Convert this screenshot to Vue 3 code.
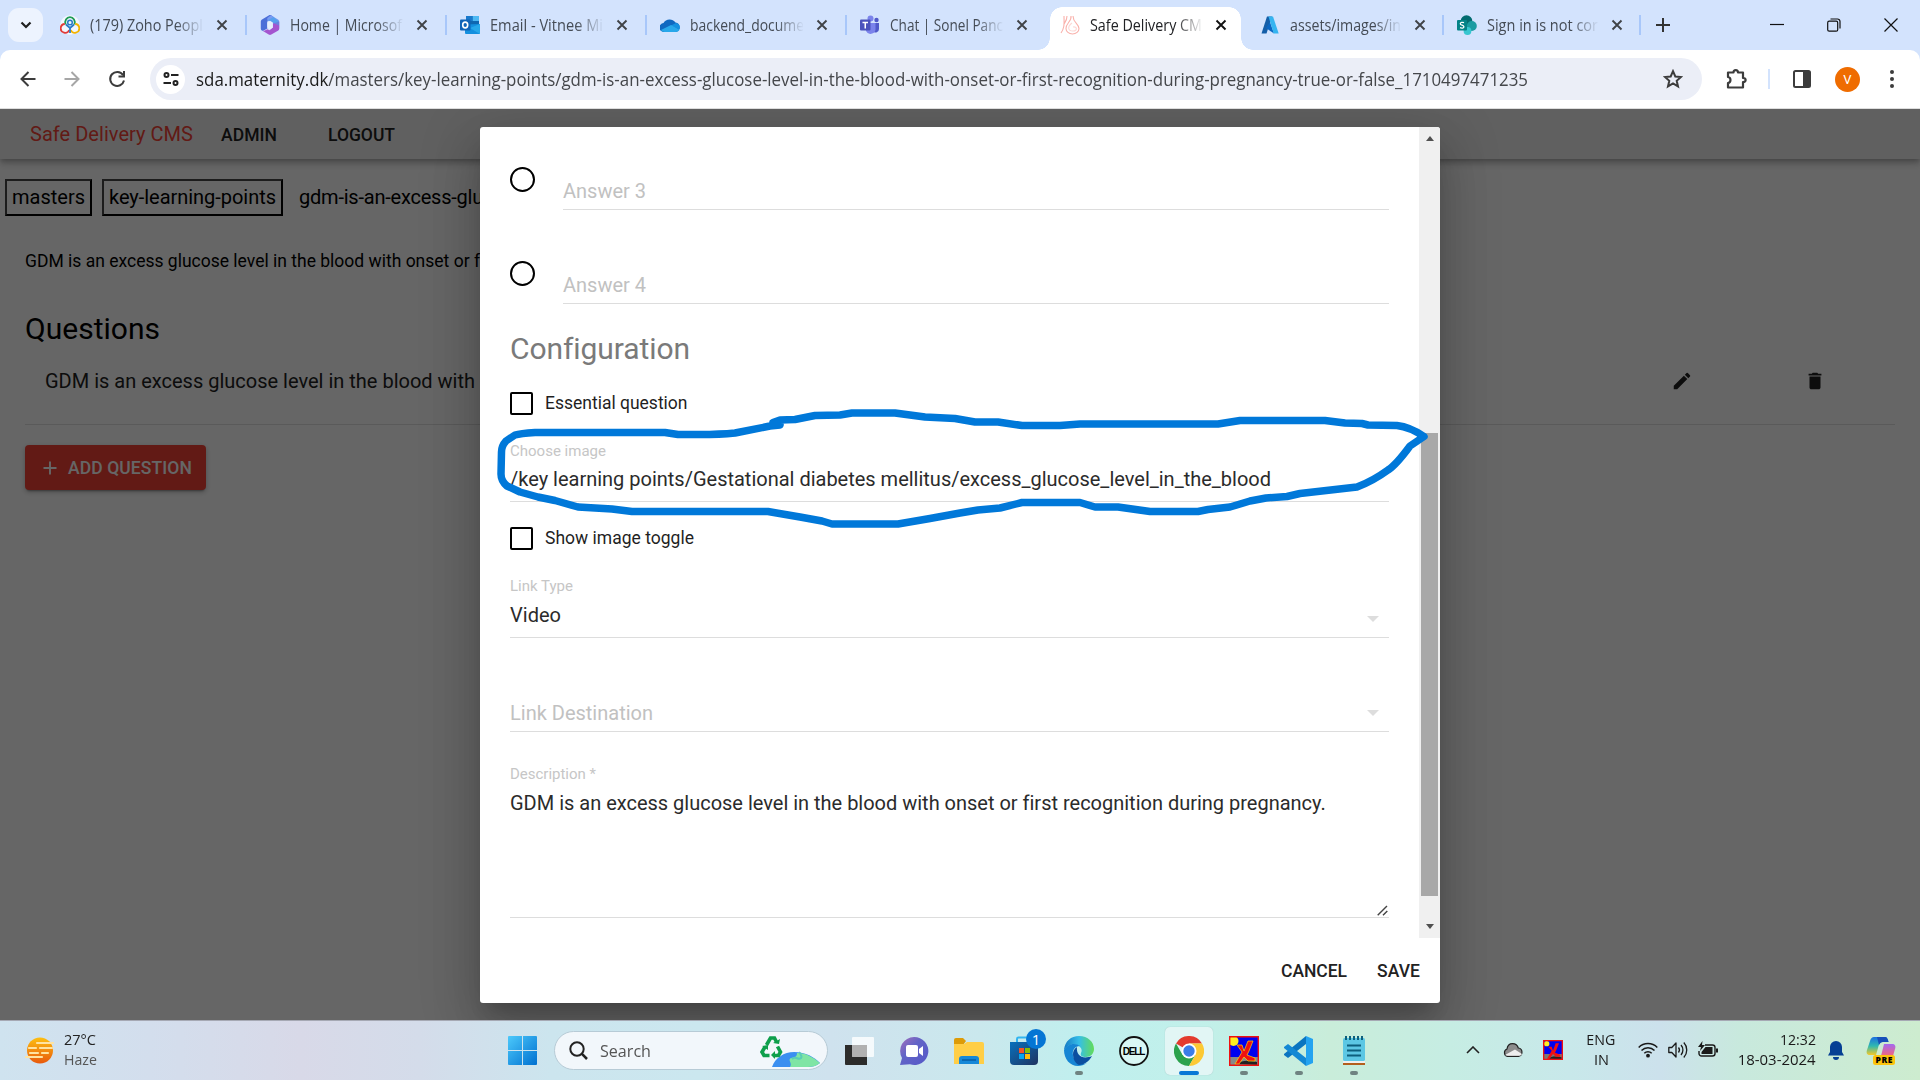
<script setup>
const tabs = [
  { id: 'zoho', title: '(179) Zoho Peopl', fit: 113, width: 200 },
  { id: 'm365', title: 'Home | Microsof', fit: 112, width: 200 },
  { id: 'outlook', title: 'Email - Vitnee Mi', fit: 113, width: 200 },
  { id: 'onedrive', title: 'backend_docume', fit: 114, width: 200 },
  { id: 'teams', title: 'Chat | Sonel Panc', fit: 113, width: 200 },
  { id: 'sda', title: 'Safe Delivery CM', fit: 112, width: 200, active: true },
  { id: 'azure', title: 'assets/images/in', fit: 111, width: 197 },
  { id: 'sharepoint', title: 'Sign in is not cor', fit: 111, width: 197 },
]

// Fits a run of text to a given width, by glyph scale or by tracking.
const vFit = {
  mounted(el, { value, modifiers }) {
    const natural = el.getBoundingClientRect().width
    if (modifiers.track) {
      el.style.letterSpacing = `${(value - natural) / el.textContent.length}px`
    } else {
      el.style.transform = `scaleX(${value / natural})`
    }
  },
}
</script>

<template>
  <div class="screen">
    <header class="tabstrip">
      <button class="tab-search">
        <svg width="12" height="8" viewBox="0 0 12 8"><path d="M1.5 1.5 6 6l4.500-4.500" fill="none" stroke="#1f1f1f" stroke-width="2.200" /></svg>
      </button>
      <div class="tabs">
        <div v-for="t in tabs" :key="t.id" class="tab" :class="{ active: t.active, narrow: t.width < 200, nosep: t.active }">
          <svg class="fav" width="20" height="20" viewBox="0 0 20 20">
            <template v-if="t.id === 'zoho'">
              <circle cx="10" cy="10" r="9.800" fill="#fff" opacity=".7" />
              <g fill="none" stroke-width="1.800">
                <path d="M5.600 9.500a4.800 5.200 0 1 1 8.800 0" stroke="#1f9d55" />
                <path d="M4.800 9a4.400 4.400 0 1 0 4.400 6" stroke="#e23c39" />
                <path d="M15.200 9a4.400 4.400 0 1 1-4.400 6" stroke="#f4b400" />
                <path d="M10 18v-6M6 9.500l4 3.500 4-3.500" stroke="#2a7bc8" />
              </g>
              <circle cx="10" cy="7.500" r="2.300" fill="none" stroke="#2a7bc8" stroke-width="1.500" />
            </template>
            <template v-else-if="t.id === 'm365'">
              <path d="M9.500 0 2 4.500C1 5.200.8 6 .8 7v6.500c0 1.500 1 2.300 2.500 2.300l4-2.300V7.500c0-1.200.4-1.900 1.400-2.500l4.800-2.900L11.500.4C10.800 0 10.200-.2 9.500 0z" fill="#4b6fd8" />
              <path d="m11 .2 7 4.300c.9.600 1.200 1.200 1.200 2.200v6.300c0 1.200-.3 1.800-1.300 2.400l-5.100-3V8L7.300 5.500V3z" fill="#7a9bf2" />
              <path d="M13 12.500v-4L19.200 6.500v7c0 1-.4 1.700-1.300 2.200l-6.600 3.900c-.9.500-1.700.5-2.600 0L2.500 15.800c1.800.3 3.300-.5 4.800-1.500l2.200 1z" fill="#a455cf" />
              <path d="M13.500 2 19 6.500v4l-6-2.500-5-3z" fill="#38a4ea" opacity=".55" />
              <path d="M7.300 7.500 10 5.800 12.800 7.500v5L10 14.200l-2.700-1.700z" fill="#e6eefc" />
            </template>
            <template v-else-if="t.id === 'outlook'">
              <path d="M6 1h13v10H6z" fill="#0f67b1" /><path d="M12.500 1H19v5h-6.500z" fill="#4db8f3" /><path d="M6 1h6.500v5H6z" fill="#1979cc" />
              <path d="M5 9.500 20 9v9a1 1 0 0 1-1 1H6a1 1 0 0 1-1-1z" fill="#1490df" /><path d="M20 9v10L10 13z" fill="#28a8ea" />
              <rect y="4.500" width="10.500" height="11" rx="1" fill="#0f64b8" /><ellipse cx="5.200" cy="10" rx="2.500" ry="2.900" fill="none" stroke="#fff" stroke-width="1.600" />
            </template>
            <template v-else-if="t.id === 'onedrive'">
              <path d="M4.500 17A4.500 4.500 0 0 1 3.500 8 7 6.500 0 0 1 15.500 7.500 4.800 4.800 0 0 1 15.500 17z" fill="#0f68c0" />
              <path d="M11 10.500 16 8a4.600 4.600 0 0 1 3.500 6.500z" fill="#1490df" /><path d="M1 15 11 10l8.500 4.800C18.800 16.400 17 17 15.500 17h-11C3 17 1.700 16.300 1 15z" fill="#28a8ea" />
            </template>
            <template v-else-if="t.id === 'teams'">
              <circle cx="16.500" cy="5" r="2.200" fill="#5059c9" /><circle cx="10.500" cy="3.500" r="3" fill="#7b83eb" />
              <path d="M13 8h6v6a3.500 3.500 0 0 1-6 2.500z" fill="#5059c9" /><path d="M6 8h9.500v6.500a5 5 0 0 1-9.500 1.500z" fill="#7b83eb" />
              <rect y="4.500" width="10.500" height="11" rx="1" fill="#4b53bc" /><path d="M2.500 7.500h5.500M5.250 7.500v6" stroke="#fff" stroke-width="1.500" />
            </template>
            <template v-else-if="t.id === 'sda'">
              <g fill="none" stroke="#f9b1ab" stroke-width="1.100"><path d="M1 18C5 12 4 8 4 1M4 9c2-3 3-4 3-8" /><path d="M11 1c1 5-5 7-5 12.500a6.500 5.500 0 0 0 13 0C19 9 13 8 13 1" /><path d="M12 8c-5 4-4 8 1 8s4-5 0-4" opacity=".5" /></g>
            </template>
            <template v-else-if="t.id === 'azure'">
              <path d="M7 1.500h5L6.500 18.500H1.500z" fill="#145ea8" /><path d="m10 7 4 11.500-8-5.500z" fill="#0a66c2" /><path d="M8.500 1.500H13l5.700 17h-5z" fill="#35b4f0" />
            </template>
            <template v-else>
              <circle cx="9.500" cy="6" r="5.800" fill="#036c70" /><circle cx="14.800" cy="11" r="5" fill="#1a9ba1" /><circle cx="10.500" cy="16" r="3.900" fill="#37c6d0" />
              <rect y="5" width="10" height="10.500" rx="1" fill="#038387" /><path d="M7 7.700C5.500 7 3.300 7.200 3.300 8.700c0 1.700 3.600 1.300 3.600 3 0 1.500-2.200 1.700-3.900 1" fill="none" stroke="#fff" stroke-width="1.300" />
            </template>
          </svg>
          <span class="title"><span v-fit="t.fit" class="fit">{{ t.title }}</span></span>
          <svg class="x" width="12" height="12" viewBox="0 0 12 12"><path d="m1.500 1.500 9 9m0-9-9 9" stroke="currentColor" stroke-width="1.900" /></svg>
        </div>
      </div>
      <svg class="plus" width="14" height="14" viewBox="0 0 14 14"><path d="M7 0v14M0 7h14" stroke="#333" stroke-width="2" /></svg>
      <div class="winctl">
        <svg width="14" height="14" viewBox="0 0 14 14"><path d="M0 6.500h14" stroke="#111" stroke-width="1.200" /></svg>
        <svg width="14" height="14" viewBox="0 0 14 14"><g fill="none" stroke="#111" stroke-width="1.200"><rect x=".7" y="3.200" width="10" height="10" rx="1.500" /><path d="M3.500 1h7a2.500 2.500 0 0 1 2.500 2.500v7" /></g></svg>
        <svg width="14" height="14" viewBox="0 0 14 14"><path d="m.5.500 13 13m0-13-13 13" stroke="#111" stroke-width="1.200" /></svg>
      </div>
    </header>

    <div class="toolbar-back">
      <div class="toolbar">
        <svg class="nav-i" width="16" height="16" viewBox="0 0 16 16"><path d="M15.500 8H1.500M8.500 1 1.500 8l7 7" fill="none" stroke="#3c3c3c" stroke-width="2" /></svg>
        <svg class="nav-i" width="16" height="16" viewBox="0 0 16 16"><path d="M.5 8h14M7.500 1l7 7-7 7" fill="none" stroke="#a6a6a6" stroke-width="2" /></svg>
        <svg class="nav-i" width="18" height="18" viewBox="0 0 18 18"><path d="M15 5A7 7 0 1 0 16 10.500M16 1v5.500h-5.500" fill="none" stroke="#3c3c3c" stroke-width="2" /></svg>
        <div class="omnibox">
          <span class="site"><svg width="16" height="14" viewBox="0 0 16 14"><g fill="none" stroke="#222" stroke-width="2"><circle cx="3.500" cy="3" r="2" /><path d="M8 3h7.500M.5 11H8" /><circle cx="12.500" cy="11" r="2" /></g></svg></span>
          <span v-fit="1332" class="url fit"><b>sda.maternity.dk</b>/masters/key-learning-points/gdm-is-an-excess-glucose-level-in-the-blood-with-onset-or-first-recognition-during-pregnancy-true-or-false_1710497471235</span>
          <svg class="star" width="20" height="20" viewBox="0 0 20 20"><path d="m10 2.200 2.300 5.300 5.700.5-4.300 3.800 1.300 5.600-5-3-5 3 1.300-5.600L2 8l5.700-.5z" fill="none" stroke="#3c3c3c" stroke-width="2" /></svg>
        </div>
        <svg class="ext" width="22" height="22" viewBox="0 0 22 22"><path d="M2 4.500h5.500c0-3.300 4.500-3.300 4.500 0h5V10c3.500 0 3.500 4 0 4v5.500H2V15c3.300-.5 3.300-5.500 0-6z" fill="none" stroke="#3c3c3c" stroke-width="2.200" stroke-linejoin="round" /></svg>
        <i class="bar"></i>
        <svg class="side" width="18" height="18" viewBox="0 0 18 18"><rect x="1" y="1" width="16" height="16" rx="1.500" fill="none" stroke="#3c3c3c" stroke-width="2" /><path d="M10 1h7v16h-7z" fill="#3c3c3c" /></svg>
        <span class="avatar">V</span>
        <svg class="dots" width="4" height="18" viewBox="0 0 4 18"><g fill="#3c3c3c"><circle cx="2" cy="2" r="2" /><circle cx="2" cy="9" r="2" /><circle cx="2" cy="16" r="2" /></g></svg>
      </div>
    </div>

    <main class="page">
      <nav class="appbar">
        <div class="brand"><span v-fit.track="163">Safe Delivery CMS</span></div>
        <div class="admin"><span v-fit.track="56">ADMIN</span></div>
        <div class="logout"><span v-fit.track="67">LOGOUT</span></div>
      </nav>
      <div class="crumbs">
        <span class="crumb c1"><span v-fit.track="73">masters</span></span>
        <span class="crumb c2"><span v-fit.track="167">key-learning-points</span></span>
        <span class="last"><span v-fit.track="184">gdm-is-an-excess-glu</span></span>
      </div>
      <p class="desc"><span v-fit.track="455">GDM is an excess glucose level in the blood with onset or f</span></p>
      <h2><span v-fit.track="135">Questions</span></h2>
      <div class="question">
        <span v-fit.track="430">GDM is an excess glucose level in the blood with</span>
        <svg class="pencil" width="22" height="22" viewBox="0 0 24 24"><path fill="#222" d="M3 17.250V21h3.750L17.810 9.940l-3.750-3.750L3 17.250zM20.710 7.040a1 1 0 0 0 0-1.410l-2.340-2.340a1 1 0 0 0-1.410 0l-1.830 1.830 3.750 3.750 1.830-1.830z" /></svg>
        <svg class="trash" width="22" height="22" viewBox="0 0 24 24"><path fill="#222" d="M6 19c0 1.100.9 2 2 2h8c1.100 0 2-.9 2-2V7H6v12zM19 4h-3.500l-1-1h-5l-1 1H5v2h14V4z" /></svg>
      </div>
      <button class="add">
        <svg width="14" height="14" viewBox="0 0 14 14"><path d="M7 .5v13M.5 7h13" stroke="#fff" stroke-width="1.900" /></svg>
        <span v-fit.track="124">ADD QUESTION</span>
      </button>

      <div class="scrim">
        <section class="dialog">
          <div class="scroller">
            <form class="form">
              <div class="answer first"><i class="radio"></i><div class="field"><span v-fit.track="83">Answer 3</span></div></div>
              <div class="answer"><i class="radio"></i><div class="field"><span v-fit.track="83">Answer 4</span></div></div>
              <h3><span v-fit.track="179">Configuration</span></h3>
              <label class="check"><i class="box"></i><span v-fit.track="142.500">Essential question</span></label>
              <div class="input g7"><small><span v-fit.track="96">Choose image</span></small><div class="val"><span v-fit.track="761">/key learning points/Gestational diabetes mellitus/excess_glucose_level_in_the_blood</span></div></div>
              <label class="check"><i class="box"></i><span v-fit.track="149">Show image toggle</span></label>
              <div class="input"><small><span v-fit.track="63">Link Type</span></small><div class="val"><span v-fit.track="51">Video</span><i class="caret"></i></div></div>
              <div class="input empty"><div class="val"><span v-fit.track="143">Link Destination</span><i class="caret"></i></div></div>
              <div class="input area"><small><span v-fit.track="86">Description *</span></small>
                <div class="val"><span v-fit.track="815">GDM is an excess glucose level in the blood with onset or first recognition during pregnancy.</span>
                  <svg class="grip" width="11" height="11" viewBox="0 0 11 11"><path d="m.7 10.300 9.300-9.300M6 10.300 10.300 6" stroke="#444" stroke-width="1.400" /></svg>
                </div>
              </div>
            </form>
            <div class="scrollbar"><i class="up"></i><i class="thumb"></i><i class="down"></i></div>
          </div>
          <footer><span v-fit.track="66">CANCEL</span><span v-fit.track="43">SAVE</span></footer>
        </section>
      </div>
    </main>

    <footer class="taskbar">
      <div class="weather">
        <svg width="30" height="27" viewBox="0 0 30 27"><defs><linearGradient id="sun" x1="0" y1="0" x2="0" y2="1"><stop stop-color="#fdbf11" /><stop offset="1" stop-color="#e8590c" /></linearGradient></defs><circle cx="15" cy="13.500" r="13" fill="url(#sun)" /><g stroke="#ffe3a0" stroke-width="2.200" stroke-linecap="round"><path d="M12 6h16M4 11h7M15 11h12M5 16h8M17 16h6M1 20h16" /></g></svg>
        <div class="wtext"><div class="deg"><span v-fit="32" class="fit">27°C</span></div><div class="haze"><span v-fit="33" class="fit">Haze</span></div></div>
      </div>
      <svg class="start" width="29" height="29" viewBox="0 0 29 29"><defs><linearGradient id="win" x1="0" y1="0" x2="1" y2="1"><stop stop-color="#4cc9fb" /><stop offset="1" stop-color="#0070d0" /></linearGradient></defs><path fill="url(#win)" d="M1 0h13v14H0V1a1 1 0 0 1 1-1zM15 0h13a1 1 0 0 1 1 1v13H15zM0 15h14v14H1a1 1 0 0 1-1-1zM15 15h14v13a1 1 0 0 1-1 1H15z" /></svg>
      <div class="search">
        <svg width="19" height="19" viewBox="0 0 19 19"><circle cx="8" cy="8" r="6.700" fill="none" stroke="#222" stroke-width="2" /><path d="m12.700 12.700 5.300 5.300" stroke="#222" stroke-width="2.500" /></svg>
        <span v-fit="51" class="fit">Search</span>
        <svg class="earth" width="62" height="32" viewBox="0 0 62 32">
          <path d="M12 31c3-9 12-15 22-15 12 0 20 5 26 11-4 3-8 4-12 4z" fill="#3b8ff0" /><path d="M30 31c3-4-3-7 1-9 4-1 6-1 6-5 10 0 17 5 23 10-4 3-8 4-12 4z" fill="#7fe5a4" /><path d="M32 23c4-4 6 2 9-1 2-2-2-4-1-6" fill="none" stroke="#59cdb5" stroke-width="2" />
          <g fill="none" stroke="#0e9f4b" stroke-width="3.600"><path d="m6.500 9 4-7h4l2 4" /><path d="m17.500 10.500 3 5.500-2 3.500h-5" /><path d="M9.500 19.500H4l-2-3.500L5 11" /></g>
          <path d="m13 7 6 1 1-5zM15 15v8l-4-4zM2 10l6-1 0 5z" fill="#0e9f4b" />
        </svg>
      </div>
      <div class="apps">
        <svg viewBox="0 0 30 30"><path d="M1 9h22v20H2a1 1 0 0 1-1-1z" fill="#2c2c2b" /><rect x="8" y="1" width="22" height="20" rx="1" fill="#fff" opacity=".8" /><path d="M8 9h15v12H8z" fill="#aaa" opacity=".85" /></svg>
        <svg viewBox="0 0 30 30"><defs><linearGradient id="chat" x1="0" y1="0" x2="1" y2="1"><stop stop-color="#a66fba" /><stop offset=".4" stop-color="#6264c7" /><stop offset="1" stop-color="#5558c8" /></linearGradient></defs><path d="M15 1a14 14 0 1 1-4 27.300L1 29l2-7A14 14 0 0 1 15 1z" fill="url(#chat)" /><rect x="7" y="9" width="12" height="12" rx="2" fill="#fff" /><path d="m20 13 4-3v10l-4-3z" fill="#fff" /></svg>
        <svg viewBox="0 0 30 30"><path d="M0 4a2 2 0 0 1 2-2h7l3 3-3 4H0z" fill="#dd9b08" /><path d="M0 8h10l3-2h15a2 2 0 0 1 2 2v20H0z" fill="#ffce46" /><path d="M5 28v-5a3 3 0 0 1 3-3h14a3 3 0 0 1 3 3v5z" fill="#1688d8" /><path d="M8 24h14" stroke="#075ca5" stroke-width="1.500" /></svg>
        <div class="store"><svg viewBox="0 0 30 30"><path d="M8 8V3a1.500 1.500 0 0 1 1.500-1.500h11" fill="none" stroke="#32b5f0" stroke-width="2" /><defs><linearGradient id="store" x1="0" y1="0" x2="1" y2="1"><stop stop-color="#0871bd" /><stop offset="1" stop-color="#203360" /></linearGradient></defs><path d="M1 6h28v19a4 4 0 0 1-4 4H5a4 4 0 0 1-4-4z" fill="url(#store)" /><path d="M10 12h5v5h-5z" fill="#f35325" /><path d="M16 12h5v5h-5z" fill="#81bc06" /><path d="M10 18h5v5h-5z" fill="#05a6f0" /><path d="M16 18h5v5h-5z" fill="#ffba08" /></svg><span class="badge">1</span></div>
        <div class="app run"><svg viewBox="0 0 30 30"><defs><linearGradient id="ed1"><stop stop-color="#1679c4" /><stop offset=".5" stop-color="#35bee8" /><stop offset="1" stop-color="#64dc58" /></linearGradient></defs><path d="M0 14C1 5 7 0 15 0c9 0 15 6 15 13 0 5-4 8-8 8-4 0-6-1-5-4 1-2 1-4-1-6-4-4-12-3-16 3z" fill="url(#ed1)" /><path d="M0 14c3-6 11-8 16-4-5 0-8 4-7 9 1 7 7 11 14 8-3 2-6 3-9 3C6 30 0 23 0 14z" fill="#1685d4" /><path d="M9 18c0-3 1-5 4-7-1 8 5 13 15 9-3 6-9 9-13 9-4-2-6-6-6-11z" fill="#0b4fa0" /></svg></div>
        <svg class="dell" viewBox="0 0 30 30"><circle cx="15" cy="15" r="14" fill="#f2fffd" fill-opacity=".5" stroke="#111" stroke-width="1.800" /><text x="3.800" y="18.700" textLength="22.500" font-family="Liberation Sans" font-weight="700" font-size="10">DELL</text></svg>
        <div class="app run tile"><svg viewBox="0 0 30 30"><path d="M15 15 2 7.500A15 15 0 0 1 28 7.500H15z" fill="#e33b2e" /><path d="M2 7.500A15 15 0 0 0 15 30l6.500-11.300L8.500 18.800z" fill="#2ba24c" /><path d="M15 7.500h13A15 15 0 0 1 15 30l6.500-11.300z" fill="#fcc934" /><circle cx="15" cy="15" r="7.500" fill="#fff" /><circle cx="15" cy="15" r="5.700" fill="#3a7de8" /></svg></div>
        <div class="app run"><svg viewBox="0 0 30 30"><path d="M1 1h28v28H1z" fill="#0000f0" /><path d="M1 21h28v8H1z" fill="#888" /><path d="M8 28c6-5 14-3 20-2v3z" fill="#222" /><circle cx="4.500" cy="5" r="5" fill="#ffee20" /><path d="M8 9h5l2 6 4-10h5l-4 10-2 4 8 3v3h-7l-4-4-5 7H6l7-12z" fill="#f01010" stroke="#ffd800" stroke-width=".7" /><path d="M.7.700h28.600v28.600H.7z" fill="none" stroke="#f01010" stroke-width="1.400" /></svg></div>
        <div class="app run"><svg viewBox="0 0 30 30"><path d="m22 0 7 3v24l-7 3z" fill="#24a3f0" /><path d="M22 0v8L4 22l-4-3v-1z" fill="#0a74c0" /><path d="M22 30v-8L4 8l-4 3v1z" fill="#1488d4" /></svg></div>
        <div class="app run"><svg viewBox="0 0 30 30"><path d="M4 26h22v3H4z" fill="#b35f1c" /><path d="M4 24h22v3H4z" fill="#eee" /><rect x="4" y="2" width="22" height="23" rx="1.500" fill="#5cc7e4" /><g stroke="#0d5f7d" stroke-width="2"><path d="M8 9.500h14M8 14.500h14M8 19.500h14" /><path d="M7 0v4M11 0v4M15 0v4M19 0v4M23 0v4" /></g></svg></div>
      </div>
      <div class="tray">
        <svg class="chev" width="14" height="8" viewBox="0 0 14 8"><path d="m1 7 6-6 6 6" fill="none" stroke="#222" stroke-width="1.600" /></svg>
        <svg class="cloud" width="20" height="14" viewBox="0 0 20 14"><path d="M4.500 13.300A3.800 3.800 0 0 1 4 6C4.500 2.500 7 .7 9.500.7c3 0 5 1.500 5.800 4.300a4.200 4.200 0 0 1 .2 8.300z" fill="#8c8c8c" stroke="#222" stroke-width="1.200" /><path d="M2 12 12 6.500l7 4.500c-.8 1.500-2 1.800-3.500 1.800h-11c-1 0-1.800-.2-2.500-.8z" fill="#eee" /></svg>
        <svg class="mini" width="20" height="20" viewBox="0 0 30 30"><path d="M1 1h28v28H1z" fill="#0000f0" /><path d="M1 21h28v8H1z" fill="#777" /><path d="M8 28c6-5 14-3 20-2v3z" fill="#222" /><circle cx="5.500" cy="5.500" r="4" fill="#ffee20" /><path d="M8 10h5l2 6 4-11h5l-4 10-2 4 8 3v3h-7l-4-4-5 7H6l7-12z" fill="#f01010" /><path d="M1 1h28v28H1z" fill="none" stroke="#f01010" stroke-width="2" /></svg>
        <div class="lang"><div><span v-fit="29" class="fit mid">ENG</span></div><div><span v-fit="15" class="fit mid">IN</span></div></div>
        <svg class="wifi" width="20" height="16" viewBox="0 0 20 16"><g fill="none" stroke="#1a1a1a" stroke-width="1.500"><path d="M.7 5.500a13 13 0 0 1 18.600 0M3.500 8.500a9 9 0 0 1 13 0M6.300 11.300a5.300 5.300 0 0 1 7.400 0" /></g><circle cx="10" cy="13.700" r="1.900" fill="#1a1a1a" /></svg>
        <svg class="vol" width="20" height="18" viewBox="0 0 20 18"><g fill="none" stroke="#1a1a1a" stroke-width="1.300"><path d="M.8 6.500h3L8 2v14l-4.200-4.500h-3z" stroke-linejoin="round" /><path d="M10.500 6.500a4 4 0 0 1 0 5M13 4a7.500 7.500 0 0 1 0 10M15.800 1.500a11 11 0 0 1 0 15" /></g></svg>
        <svg class="bat" width="20" height="17" viewBox="0 0 20 17"><path d="M7 4h7.500A2.500 2.500 0 0 1 17 6.500v6a2.500 2.500 0 0 1-2.500 2.500h-11A2.500 2.500 0 0 1 1 12.500V10" fill="none" stroke="#1a1a1a" stroke-width="1.400" /><path d="M7.500 6h7v7H3.500v-2zM18 7.500h2v4h-2zM4.500 0 0 6h3L2 10l5-6H4z" fill="#1a1a1a" /></svg>
        <div class="clock"><div><span v-fit="36" class="fit right">12:32</span></div><div><span v-fit="78" class="fit right">18-03-2024</span></div></div>
        <svg class="bell" width="16" height="19" viewBox="0 0 16 19"><path d="M8 0a6 6 0 0 1 6 6v5l2 3.500H0L2 11V6a6 6 0 0 1 6-6zM5 16h6a3 3 0 0 1-6 0z" fill="#063f94" /></svg>
        <svg class="pilot" width="30" height="29" viewBox="0 0 30 29"><defs><linearGradient id="cp1" x1="0" y1="0" x2="0" y2="1"><stop stop-color="#1c6fe0" /><stop offset=".5" stop-color="#2fb9b0" /><stop offset="1" stop-color="#f6c928" /></linearGradient><linearGradient id="cp2" x1="0" y1="0" x2="0" y2="1"><stop stop-color="#a469f0" /><stop offset="1" stop-color="#f2677c" /></linearGradient></defs><path d="M8 1h11c2 0 3 2 3.500 5H17c-3 0-4 2-5 6l-2 7H4c-3 0-4-2-3-5l3-9c1-3 2-4 4-4z" fill="url(#cp1)" /><path d="M18 8h8c3 0 4 2 3 5l-2 7H15z" fill="url(#cp2)" /><path d="M11 1h8c2 0 3 2 3.500 5H17c-2 0-3 1-4 3z" fill="#174fb8" /><rect x="7" y="19" width="22" height="10" rx="2.500" fill="#fcc40c" /><text x="9.500" y="27.200" textLength="17" font-family="Open Sans" font-size="8.500" font-weight="800">PRE</text></svg>
      </div>
    </footer>

    <svg class="ink" viewBox="0 0 1920 1080"><path d="M780 425 770 426 735 433Q720 434.500 700 434.500H678L665 432.500H535Q520 433.500 515 435L506 441Q501.500 446 501.500 452L501 474Q501 481 507 486L520 492 538 497 555 500.500 578 507 612 509 632 511.500H768L800 517 822 521 832 524H898L930 518.500 960 513 978 510 1000 508 1022 502.500H1080L1095 507H1118L1150 511.500H1198L1208 509.500 1230 507 1250 501 1266 498 1287 496.500 1300 493.500 1357 487Q1373 481 1388 470 1396 465 1410 446L1424 436.500Q1410 427 1397 425.500L1368 425 1362 423.500 1345 423 1325 420.500H1240L1218 424H1080L1060 425.500H1022L998 422H975L955 418.500 925 417 895 413H852L840 415 815 415.500 795 419.500 780 420 773 422.500Z" /></svg>
  </div>
</template>

<style>
html,
body {
  overflow: hidden;
}
</style>

<style scoped>
* { box-sizing: border-box; }
.screen { position: relative; width: 1920px; height: 1080px; display: flex; flex-direction: column; overflow: hidden; font-family: Roboto, sans-serif; }
svg { display: block; flex: none; }
button { border: 0; padding: 0; }
span { white-space: nowrap; }
.fit { display: inline-block; transform-origin: left center; }
.right { transform-origin: right center; }
.mid { transform-origin: center; }

.tabstrip { height: 50px; flex: none; background: #d3e3fd; display: flex; align-items: center; padding-left: 8px; font: 15.500px "Open Sans", sans-serif; color: #444b55; position: relative; }
.tab-search { width: 35px; height: 34px; border-radius: 11px; background: #edf3fe; display: grid; place-items: center; margin-right: 7px; }
.tabs { display: flex; align-self: stretch; }
.tab { width: 200px; display: flex; align-items: center; padding-left: 10px; position: relative; }
.tab.narrow { width: 197px; }
.tab .title { width: 113px; margin: 0 13px 0 10px; overflow: hidden; line-height: 24px; -webkit-mask-image: linear-gradient(90deg, #000 76%, transparent 101%); mask-image: linear-gradient(90deg, #000 76%, transparent 101%); }
.tab.narrow .title { width: 111px; }
.tab:not(.nosep)::after { content: ""; position: absolute; right: 3px; top: 15px; width: 2px; height: 20px; background: #a8c7fa; }
.tab:nth-child(5)::after { display: none; }
.tab .x { color: #404347; }
.fav, .x, .title { position: relative; }
.tab.active { color: #202124; }
.tab.active .x { color: #111; }
.tab.active .title { width: 112px; }
.tab.active::before { content: ""; position: absolute; left: -12px; top: 7px; width: 215px; height: 43px; background:
  radial-gradient(circle at 0 0, transparent 11.500px, #fff 12px) left bottom / 12px 12px no-repeat,
  radial-gradient(circle at 100% 0, transparent 11.500px, #fff 12px) right bottom / 12px 12px no-repeat,
  radial-gradient(circle at 12px 12px, #fff 11.500px, transparent 12px) 12px 0 / 12px 12px no-repeat,
  radial-gradient(circle at 0 12px, #fff 11.500px, transparent 12px) 191px 0 / 12px 12px no-repeat,
  linear-gradient(#fff, #fff) 24px 0 / 167px 12px no-repeat,
  linear-gradient(#fff, #fff) 12px 12px / 191px 31px no-repeat; }
.plus { margin-left: 12px; }
.winctl { margin-left: auto; margin-right: 22px; display: flex; gap: 43px; }

.toolbar-back { background: #d3e3fd; flex: none; height: 59px; }
.toolbar { height: 59px; background: #fff; border-radius: 10px 10px 0 0; border-bottom: 1px solid #ddd; display: flex; align-items: center; padding-left: 20px; }
.nav-i { margin-right: 28px; }
.nav-i:nth-child(3) { margin-right: 23px; }
.omnibox { position: relative; width: 1552px; height: 42px; margin-left: 1px; border-radius: 21px; background: #ebeef7; display: flex; align-items: center; padding: 0 20px 0 6px; }
.site { width: 29px; height: 29px; border-radius: 50%; background: #fff; display: grid; place-items: center; margin-right: 11px; }
.url { font: 18px/28px "Open Sans", sans-serif; color: #45474b; width: max-content; flex: none; }
.url b { font-weight: 400; color: #1b1b1b; }
.star { position: absolute; right: 19px; top: 11px; }
.ext { margin-left: 24px; }
.bar { width: 2px; height: 20px; background: #d3e3fd; margin-left: 20px; }
.side { margin-left: 23px; }
.avatar { width: 25px; height: 25px; border-radius: 50%; background: #ef6c00; color: #fff; font-size: 13px; display: grid; place-items: center; margin-left: 24px; }
.dots { margin-left: 30px; }

.page { height: 911px; flex: none; background: #fff; position: relative; color: #000; overflow: hidden; }
.appbar { height: 50px; background: #f0f0f0; display: flex; align-items: center; padding-left: 30px; box-shadow: 0 2px 5px -1px rgba(0, 0, 0, .2), 0 5px 6px rgba(0, 0, 0, .14), 0 1px 12px rgba(0, 0, 0, .12); color: #222; }
.brand { font-size: 20px; color: #f44336; width: 191px; }
.admin, .logout { font-size: 17.500px; font-weight: 500; padding-top: 1px; }
.admin { width: 107px; }
.crumbs { display: flex; align-items: center; margin: 20px 0 0 5px; height: 37px; font-size: 20px; }
.crumb { height: 37px; border: 2px outset #555; border-color: #484848 #000 #000 #484848; padding: 4px 5px; line-height: 25px; }
.c1 { width: 87px; margin-right: 10px; }
.c2 { width: 181px; margin-right: 16px; }
.last { width: 181px; overflow: hidden; line-height: 25px; }
.desc { margin: 34px 0 0 25px; font-size: 17.500px; line-height: 22px; }
h2 { margin: 39px 0 0 25px; font-size: 30px; line-height: 36px; font-weight: 400; }
.question { margin: 1px 25px 0; height: 77px; border-bottom: 1px solid rgba(0, 0, 0, .12); padding: 0 69px 10px 20px; display: flex; align-items: center; font-size: 20px; color: #222; }
.pencil { margin-left: auto; }
.trash { margin-left: 111px; }
.add { margin: 20px 0 0 25px; width: 181px; height: 45px; border-radius: 4px; background: #f44336; color: #fff; display: flex; align-items: center; padding-left: 18px; gap: 11px; font: 500 17.500px Roboto, sans-serif; box-shadow: 0 3px 2px -2px rgba(0, 0, 0, .3), 0 2px 5px rgba(0, 0, 0, .25); }
.add span { padding-top: 1px; }

.scrim { position: absolute; inset: 0; background: rgba(0, 0, 0, .6); padding: 18px 480px 0; }
.dialog { width: 960px; height: 876px; background: #fff; border-radius: 3px; overflow: hidden; box-shadow: 0 14px 19px -9px rgba(0, 0, 0, .2), 0 30px 48px 4px rgba(0, 0, 0, .14), 0 11px 58px 10px rgba(0, 0, 0, .12); display: flex; flex-direction: column; }
.scroller { height: 811px; display: flex; }
.form { width: 939px; padding: 0 30px; font-size: 20px; line-height: 24px; color: #2b2b2b; }
.answer { height: 94px; display: flex; align-items: flex-end; }
.answer.first { height: 83px; }
.radio { width: 25px; height: 25px; border: 2px solid #000; border-radius: 50%; margin: 0 28px 18px 0; }
.field { flex: 1; border-bottom: 1px solid #ddd; padding-bottom: 6px; color: #c1c1c1; }
h3 { margin: 27px 0 0; font-size: 30px; line-height: 36px; font-weight: 400; color: #7a7a7a; }
.check { margin-top: 25px; height: 24px; display: flex; font-size: 17.500px; line-height: 23px; color: #1f1f1f; }
.box { width: 23px; height: 23px; border: 2px solid #000; border-radius: 2px; margin-right: 12px; }
.input { margin-top: 26px; }
small { display: block; font-size: 15px; line-height: 18px; color: #c6c6c6; margin-bottom: 8px; }
.g7 small { margin-bottom: 7px; }
.val { position: relative; height: 35px; border-bottom: 1px solid #ddd; display: flex; justify-content: space-between; }
.caret { border: 6px solid transparent; border-top-color: #ddd; border-bottom: 0; margin: 13px 10px 0 0; }
.empty { margin-top: 63px; color: #c1c1c1; }
.empty .val { height: 31px; }
.empty .caret { margin-top: 9px; }
.area { margin-top: 33px; }
.area .val { height: 127px; }
.grip { position: absolute; right: 1px; bottom: 1px; }
.scrollbar { width: 21px; background: #f0f0f0; display: flex; flex-direction: column; align-items: center; }
.up { border: 4.500px solid transparent; border-bottom: 5px solid #505050; border-top: 0; margin-top: 9px; }
.thumb { width: 17px; height: 463px; background: #a8a8a8; margin-top: 292px; }
.down { border: 4.500px solid transparent; border-top: 5px solid #505050; border-bottom: 0; margin-top: 28px; }
.dialog footer { height: 65px; display: flex; justify-content: flex-end; gap: 30px; padding: 20px 20px 0 0; font-size: 17.500px; line-height: 26px; font-weight: 500; color: #222; }

.taskbar { height: 60px; flex: none; border-top: 1px solid #a6a9b4; display: flex; align-items: center; font-family: "Open Sans", sans-serif; background: linear-gradient(90deg, #cfe3ef 0, #d3deed 150px, #d8d9e8 300px, #d4dcea 420px, #cce5ee 550px, #cbe7ef 700px, #cfe2ee 830px, #cae8ed 980px, #c0efee 1080px, #c1f0ea 1200px, #c9edda 1330px, #c6ede3 1450px, #c8e8ea 1570px, #cce1ec 1660px, #c8e9dd 1740px, #cdeccf 1920px); }
.weather { display: flex; align-items: center; width: 508px; padding-left: 25px; gap: 9px; font-size: 14.500px; line-height: 20px; color: #222; }
.wtext { padding-bottom: 2px; }
.haze { color: #555; }
.search { width: 274px; height: 39px; margin-left: 17px; border-radius: 20px; background: #f2f7fb; border: 1px solid #b7cbd6; display: flex; align-items: center; padding-left: 14px; font-size: 17px; color: #555; gap: 12px; position: relative; }
.earth { position: absolute; right: 5px; top: 4px; }
.apps { margin-left: 16px; display: flex; gap: 25px; }
.apps svg { width: 30px; height: 30px; }
.store, .app { position: relative; }
.badge { position: absolute; left: 17px; top: -7px; width: 20px; height: 20px; border-radius: 50%; background: #0575d4; color: #fff; font: 15px/20px "Open Sans", sans-serif; text-align: center; }
.run::after { content: ""; position: absolute; left: 11px; top: 35px; width: 8px; height: 4px; border-radius: 2px; background: #6f8381; }
.tile::before { content: ""; position: absolute; left: -9px; top: -9px; width: 48px; height: 48px; border-radius: 5px; background: #e2f6f5; box-shadow: 0 0 1px #9bb; }
.tile svg { position: relative; }
.tile::after { left: 5px; width: 20px; background: #0878d6; }
.tray { margin-left: auto; display: flex; align-items: center; font-size: 14.500px; line-height: 20px; color: #1a1a1a; padding: 0 24px 1px 0; }
.cloud { margin-left: 23px; }
.mini { margin-left: 20px; }
.lang { width: 40px; margin-left: 18px; text-align: center; }
.wifi { margin-left: 17px; }
.vol { margin-left: 10px; }
.bat { margin-left: 10px; margin-top: -2px; }
.clock { width: 98px; text-align: right; }
.bell { margin-left: 12px; }
.pilot { margin-left: 22px; }

.ink { position: absolute; inset: 0; width: 1920px; height: 1080px; pointer-events: none; }
.ink path { fill: none; stroke: #0078d9; stroke-width: 7.500; stroke-linejoin: round; stroke-linecap: round; }
</style>
